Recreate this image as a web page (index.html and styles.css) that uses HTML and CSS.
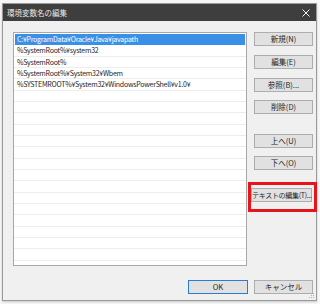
FILE: index.html
```html
<!DOCTYPE html>
<html lang="ja">
<head>
    <meta charset="utf-8">
    <link rel="stylesheet" href="styles.css">
</head>
<body>
    <div class="window">
        <div class="titlebar">
            <span class="title">環境変数名の編集</span>
            <svg class="close" width="8" height="8" viewBox="0 0 8 8">
                <path d="M0.5 0.5 L7.5 7.5 M7.5 0.5 L0.5 7.5" stroke="#f2f2f2" stroke-width="1" fill="none"/>
            </svg>
        </div>
        <div class="content">
            <div class="main">
                <div class="list">
                    <div class="row selected">C:¥ProgramData¥Oracle¥Java¥javapath</div>
                    <div class="row">%SystemRoot%¥system32</div>
                    <div class="row">%SystemRoot%</div>
                    <div class="row">%SystemRoot%¥System32¥Wbem</div>
                    <div class="row">%SYSTEMROOT%¥System32¥WindowsPowerShell¥v1.0¥</div>
                </div>
                <div class="buttons">
                    <button class="btn">新規(N)</button>
                    <button class="btn">編集(E)</button>
                    <button class="btn">参照(B)...</button>
                    <button class="btn">削除(D)</button>
                    <button class="btn group">上へ(U)</button>
                    <button class="btn">下へ(O)</button>
                    <div class="highlight">
                        <button class="btn wide">テキストの編集(T)...</button>
                    </div>
                </div>
            </div>
            <div class="footer">
                <button class="btn ok">OK</button>
                <button class="btn">キャンセル</button>
            </div>
        </div>
        <svg class="grip" width="6" height="6" viewBox="0 0 6 6">
            <rect x="4" y="0" width="1" height="1" fill="#b0b0b0"/>
            <rect x="2" y="2" width="1" height="1" fill="#b0b0b0"/>
            <rect x="4" y="2" width="1" height="1" fill="#b0b0b0"/>
            <rect x="0" y="4" width="1" height="1" fill="#b0b0b0"/>
            <rect x="2" y="4" width="1" height="1" fill="#b0b0b0"/>
            <rect x="4" y="4" width="1" height="1" fill="#b0b0b0"/>
        </svg>
    </div>
</body>
</html>
```

FILE: styles.css
```css
body {
    margin: 0;
    background-color: #f7f7f7;
    font-family: "Noto Sans CJK JP", "Noto Sans", sans-serif;
    width: 320px;
    height: 304px;
    overflow: hidden;
}
.window {
    position: relative;
    margin: 3px 0 0 2px;
    width: 313px;
    height: 296px;
    border: 1px solid #9a9a9a;
    background-color: #f0f0f0;
    box-shadow: 0 1px 2px rgba(0, 0, 0, 0.2);
}
.titlebar {
    height: 17px;
    background-color: #3e3e3e;
    display: flex;
    align-items: center;
    justify-content: space-between;
    padding: 0 6px 0 4px;
}
.title {
    color: #e8e8e8;
    font-size: 7.5px;
}
.close {
    display: block;
}
.content {
    padding: 11px 3px 0 10px;
}
.main {
    display: flex;
    gap: 7px;
}
.list {
    width: 232px;
    height: 230px;
    border: 1px solid #a8a8a8;
    background-color: white;
    padding: 1px;
    background-image: repeating-linear-gradient(to bottom, transparent 0, transparent 10.33px, #eeeeee 10.33px, #eeeeee 11.33px);
    background-origin: content-box;
    background-clip: padding-box;
}
.row {
    height: 11.33px;
    line-height: 10.33px;
    font-size: 7px;
    letter-spacing: -0.25px;
    color: #262626;
    padding-left: 2px;
    white-space: nowrap;
    box-sizing: border-box;
}
.row.selected {
    background-color: #3a8fe6;
    color: white;
}
.buttons {
    width: 59px;
    display: flex;
    flex-direction: column;
}
.btn {
    box-sizing: border-box;
    width: 59px;
    height: 14px;
    padding: 0;
    border: 1px solid #adadad;
    background-color: #e1e1e1;
    color: #262626;
    font-family: "Noto Sans CJK JP", "Noto Sans", sans-serif;
    font-size: 7.5px;
    line-height: 12px;
    text-align: center;
    white-space: nowrap;
}
.buttons .btn + .btn {
    margin-top: 9px;
}
.buttons .btn:nth-child(4) {
    margin-top: 8px;
}
.buttons .btn.group {
    margin-top: 20px;
}
.buttons .btn:nth-child(6) {
    margin-top: 8px;
}
.highlight {
    display: flex;
    align-items: flex-start;
    margin: 12px -4px 0 -6px;
    height: 21px;
    border: 3px solid #e8141b;
    padding: 3px 2px 0 0;
    box-sizing: content-box;
}
.btn.wide {
    width: 61px;
    font-size: 7px;
    letter-spacing: -0.3px;
}
.footer {
    display: flex;
    justify-content: flex-end;
    gap: 6px;
    margin-top: 14px;
}
.btn.ok {
    width: 60px;
    border-color: #2a7bd8;
}
.grip {
    position: absolute;
    right: 1px;
    bottom: 1px;
}
```
